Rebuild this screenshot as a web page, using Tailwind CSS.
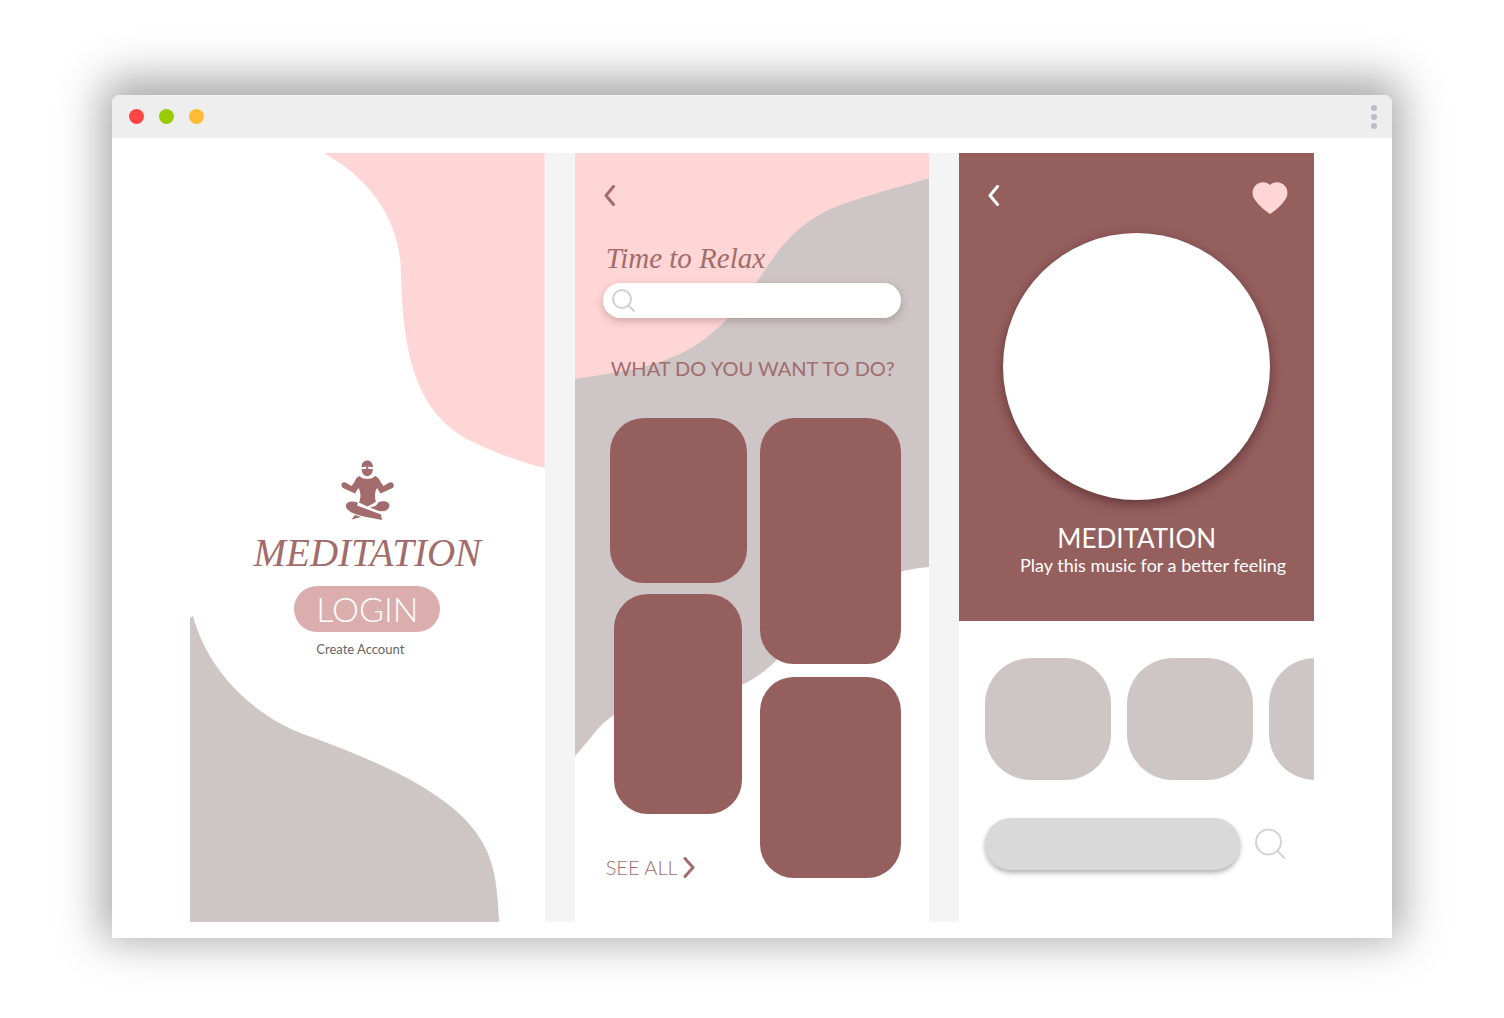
<!DOCTYPE html>
<html lang="en">
<head>
<meta charset="utf-8">
<meta name="viewport" content="width=device-width, initial-scale=1">
<title>Meditation</title>
<script src="https://cdn.jsdelivr.net/npm/@tailwindcss/browser@4"></script>
</head>
<body class="min-h-screen bg-white px-28 pt-[95px] pb-20 font-['Lato',sans-serif]">
<div class="rounded-t-lg bg-white shadow-[0_-7px_44px_10px_rgba(0,0,0,0.34)]">
  <header class="flex h-[43px] items-center justify-between rounded-t-lg bg-[#eeeeee] pr-[15px] pl-[17px]">
    <div class="flex gap-[15px]">
      <span class="size-[15px] rounded-full bg-[#ff4444]"></span>
      <span class="size-[15px] rounded-full bg-[#99cc00]"></span>
      <span class="size-[15px] rounded-full bg-[#ffbb33]"></span>
    </div>
    <button aria-label="Menu" class="flex flex-col gap-[3px]">
      <span class="size-[6px] rounded-full bg-[#b9c0c4]"></span>
      <span class="size-[6px] rounded-full bg-[#b9c0c4]"></span>
      <span class="size-[6px] rounded-full bg-[#b9c0c4]"></span>
    </button>
  </header>

  <main class="px-[78px] pt-[15px] pb-4">
    <div class="grid grid-cols-3 gap-[30px] bg-[#f4f4f4]">

      <!-- Welcome screen -->
      <section class="relative flex min-h-[769px] flex-col items-center bg-white pt-[307px]">
        <svg class="absolute inset-0 size-full" viewBox="0 0 355 769" preserveAspectRatio="none" aria-hidden="true">
          <path fill="#ffd6d6" d="M137 0H355V315C330 309 298 297 279 287C225 258 213 200 211 117C210 66 178 24 135 1Z"/>
          <path fill="#cec5c6" d="M0 465L3 463C18 519 64 563 116 582C180 605 240 631 274 665C305 697 307 725 309.500 769H0Z"/>
        </svg>
        <svg class="relative h-[60px] w-[53px]" viewBox="0 0 53 60" fill="#a16c6b" aria-hidden="true">
          <path d="M20.500 7.500C20.500 3 23 .5 26.200 .5S32 3 32 7.500C30 6.600 28.600 6.600 27.200 6.800V8.800C28.600 8.600 30 9.200 32 9C31.500 13.500 29.500 16 26.200 16S21 13.500 20.500 9C22.500 9.200 23.900 8.600 25.300 8.800V6.800C23.900 6.600 22.500 6.600 20.500 7.500Z"/>
          <path d="M18.500 16C21.500 20 31 20 34 16C37 17 38.500 19.500 39.500 22L42.500 26L48.500 22.500C52 21 54.500 26 51.500 28L39.500 33.500L36 28C33.500 32 33.500 38 35 41.500C32 44 30 44.500 26.500 46.500L18 42.500C20 38 20 32 17.500 28L14 33.500L2 28C-1 26 .5 21 4.500 22.500L10.500 26L13.500 22C14.500 19.500 15.500 17 18.500 16Z"/>
          <path d="M5 45C6 41 13 40.500 17 43L16 45.500L40 54.500L41 60L28 57.500C14 55 4 51 5 45Z"/>
          <path d="M37 42.500C43 39.500 49 42 48.500 46C47.500 50.500 43 52 38 51L29 47.500C32 46.500 36 46.500 37 42.500Z"/>
          <path d="M14 55L20 57L10.500 59.500Z"/>
        </svg>
        <h1 class="relative mt-[9px] font-['Liberation_Serif',serif] text-[39px] leading-[48px] text-[#a16c6b] italic">MEDITATION</h1>
        <button class="relative mt-[9px] h-[46px] w-[146px] rounded-full bg-[#dbadad] text-[34px] leading-[46px] font-light text-white">LOGIN</button>
        <a href="#" class="relative mt-[9px] mr-[14px] text-[13px] leading-4 text-[#666666]">Create Account</a>
      </section>

      <!-- Browse screen -->
      <section class="relative bg-white px-[28px] pt-8 text-[#a16c6b]">
        <svg class="absolute inset-0 size-full" viewBox="0 0 355 769" preserveAspectRatio="none" aria-hidden="true">
          <path fill="#ffd6d6" d="M0 0H355V300H0Z"/>
          <path fill="#cec5c6" d="M0 226C40 220 75 215 105 201C140 185 168 151 188 120C205 94 223 70 260 54C290 43 320 35 355 25V414C290 419 245 458 210 498C160 557 110 538 50 556C25 568 22 579 0 603Z"/>
        </svg>
        <div class="relative">
          <button aria-label="Back" class="block">
            <svg class="h-[21px] w-[14px]" viewBox="0 0 14 21" fill="none" stroke="#a16c6b" stroke-width="3" stroke-linecap="round" stroke-linejoin="round"><path d="M10.500 1.500L3 10.500L10.500 19.500"/></svg>
          </button>
          <h2 class="mt-8 pl-[3px] font-['Liberation_Serif',serif] text-[29px] leading-[40px] italic">Time to Relax</h2>
          <label class="mt-[5px] flex h-[35px] items-center rounded-full bg-white px-2 shadow-[0_3px_8px_rgba(70,30,30,0.25)]">
            <svg class="size-[26px] shrink-0" viewBox="0 0 26 26" fill="none" stroke="#d0d0d0" stroke-width="2" aria-hidden="true"><circle cx="11" cy="11" r="9"/><path d="M17.500 17.500L23.500 23.500"/></svg>
            <input type="search" aria-label="Search" class="min-w-0 grow bg-transparent px-2 text-base outline-none">
          </label>
          <h3 class="mt-[35px] pl-2 text-[20px] leading-[30px] whitespace-nowrap">WHAT DO YOU WANT TO DO?</h3>
          <div class="mt-[35px] flex justify-between">
            <div class="ml-[7px] flex w-[137px] flex-col items-center">
              <button aria-label="Activity 1" class="h-[165px] w-full rounded-[34px] bg-[#955f5e]"></button>
              <button aria-label="Activity 2" class="mt-[11px] h-[220px] w-[128px] rounded-[34px] bg-[#955f5e]"></button>
              <a href="#" class="mt-[38px] -ml-1 flex items-center gap-1 self-start text-[20px] leading-[30px] font-light whitespace-nowrap">SEE ALL
                <svg class="h-[21px] w-[14px]" viewBox="0 0 14 21" fill="none" stroke="#a16c6b" stroke-width="3" stroke-linecap="round" stroke-linejoin="round" aria-hidden="true"><path d="M3 1.500L11 10.500L3 19.500"/></svg>
              </a>
            </div>
            <div class="flex w-[141px] flex-col gap-[13px]">
              <button aria-label="Activity 3" class="h-[246px] rounded-[34px] bg-[#955f5e]"></button>
              <button aria-label="Activity 4" class="h-[201px] rounded-[34px] bg-[#955f5e]"></button>
            </div>
          </div>
        </div>
      </section>

      <!-- Player screen -->
      <section class="min-w-0 overflow-hidden bg-white">
        <div class="flex h-[468px] flex-col items-center bg-[#955f5e] pt-[29px] text-white">
          <div class="flex w-full items-start justify-between pr-[26px] pl-[27px]">
            <button aria-label="Back" class="pt-[3px]">
              <svg class="h-[21px] w-[14px]" viewBox="0 0 14 21" fill="none" stroke="white" stroke-width="3" stroke-linecap="round" stroke-linejoin="round"><path d="M11.500 1.500L4 10.500L11.500 19.500"/></svg>
            </button>
            <button aria-label="Favourite">
              <svg class="h-[32px] w-[36px]" viewBox="0 0 36 32" fill="#ffd6d6"><path d="M18 3C22-1 29-.5 33 4C36 8 36.500 13 33 18C29 24 23 28.500 18 32C13 28.500 7 24 3 18C-.5 13 0 8 3 4C7-.5 14-1 18 3Z"/></svg>
            </button>
          </div>
          <div class="mt-[19px] size-[267px] rounded-full bg-white shadow-[0_4px_12px_rgba(50,15,15,0.5)]"></div>
          <h2 class="mt-[22px] text-[26px] leading-8">MEDITATION</h2>
          <p class="ml-[33px] text-[18px] leading-[22px] whitespace-nowrap">Play this music for a better feeling</p>
        </div>
        <div class="mt-[37px] ml-[26px] flex gap-4">
          <button aria-label="Track 1" class="h-[122px] w-[126px] shrink-0 rounded-[46px] bg-[#cec5c6]"></button>
          <button aria-label="Track 2" class="h-[122px] w-[126px] shrink-0 rounded-[46px] bg-[#cec5c6]"></button>
          <button aria-label="Track 3" class="h-[122px] w-[126px] shrink-0 rounded-[46px] bg-[#cec5c6]"></button>
        </div>
        <div class="mt-[38px] flex items-center gap-[14px] pr-7 pl-[26px]">
          <input type="search" aria-label="Search music" class="h-[52px] min-w-0 grow rounded-full bg-[#d9d9d9] px-6 shadow-[0_3px_5px_rgba(0,0,0,0.3)] outline-none">
          <button aria-label="Search">
            <svg class="size-8" viewBox="0 0 32 32" fill="none" stroke="#d3d3d3" stroke-width="2"><circle cx="14.500" cy="14" r="12.500"/><path d="M23.500 23L31 30.500"/></svg>
          </button>
        </div>
      </section>
    </div>
  </main>
</div>
</body>
</html>
